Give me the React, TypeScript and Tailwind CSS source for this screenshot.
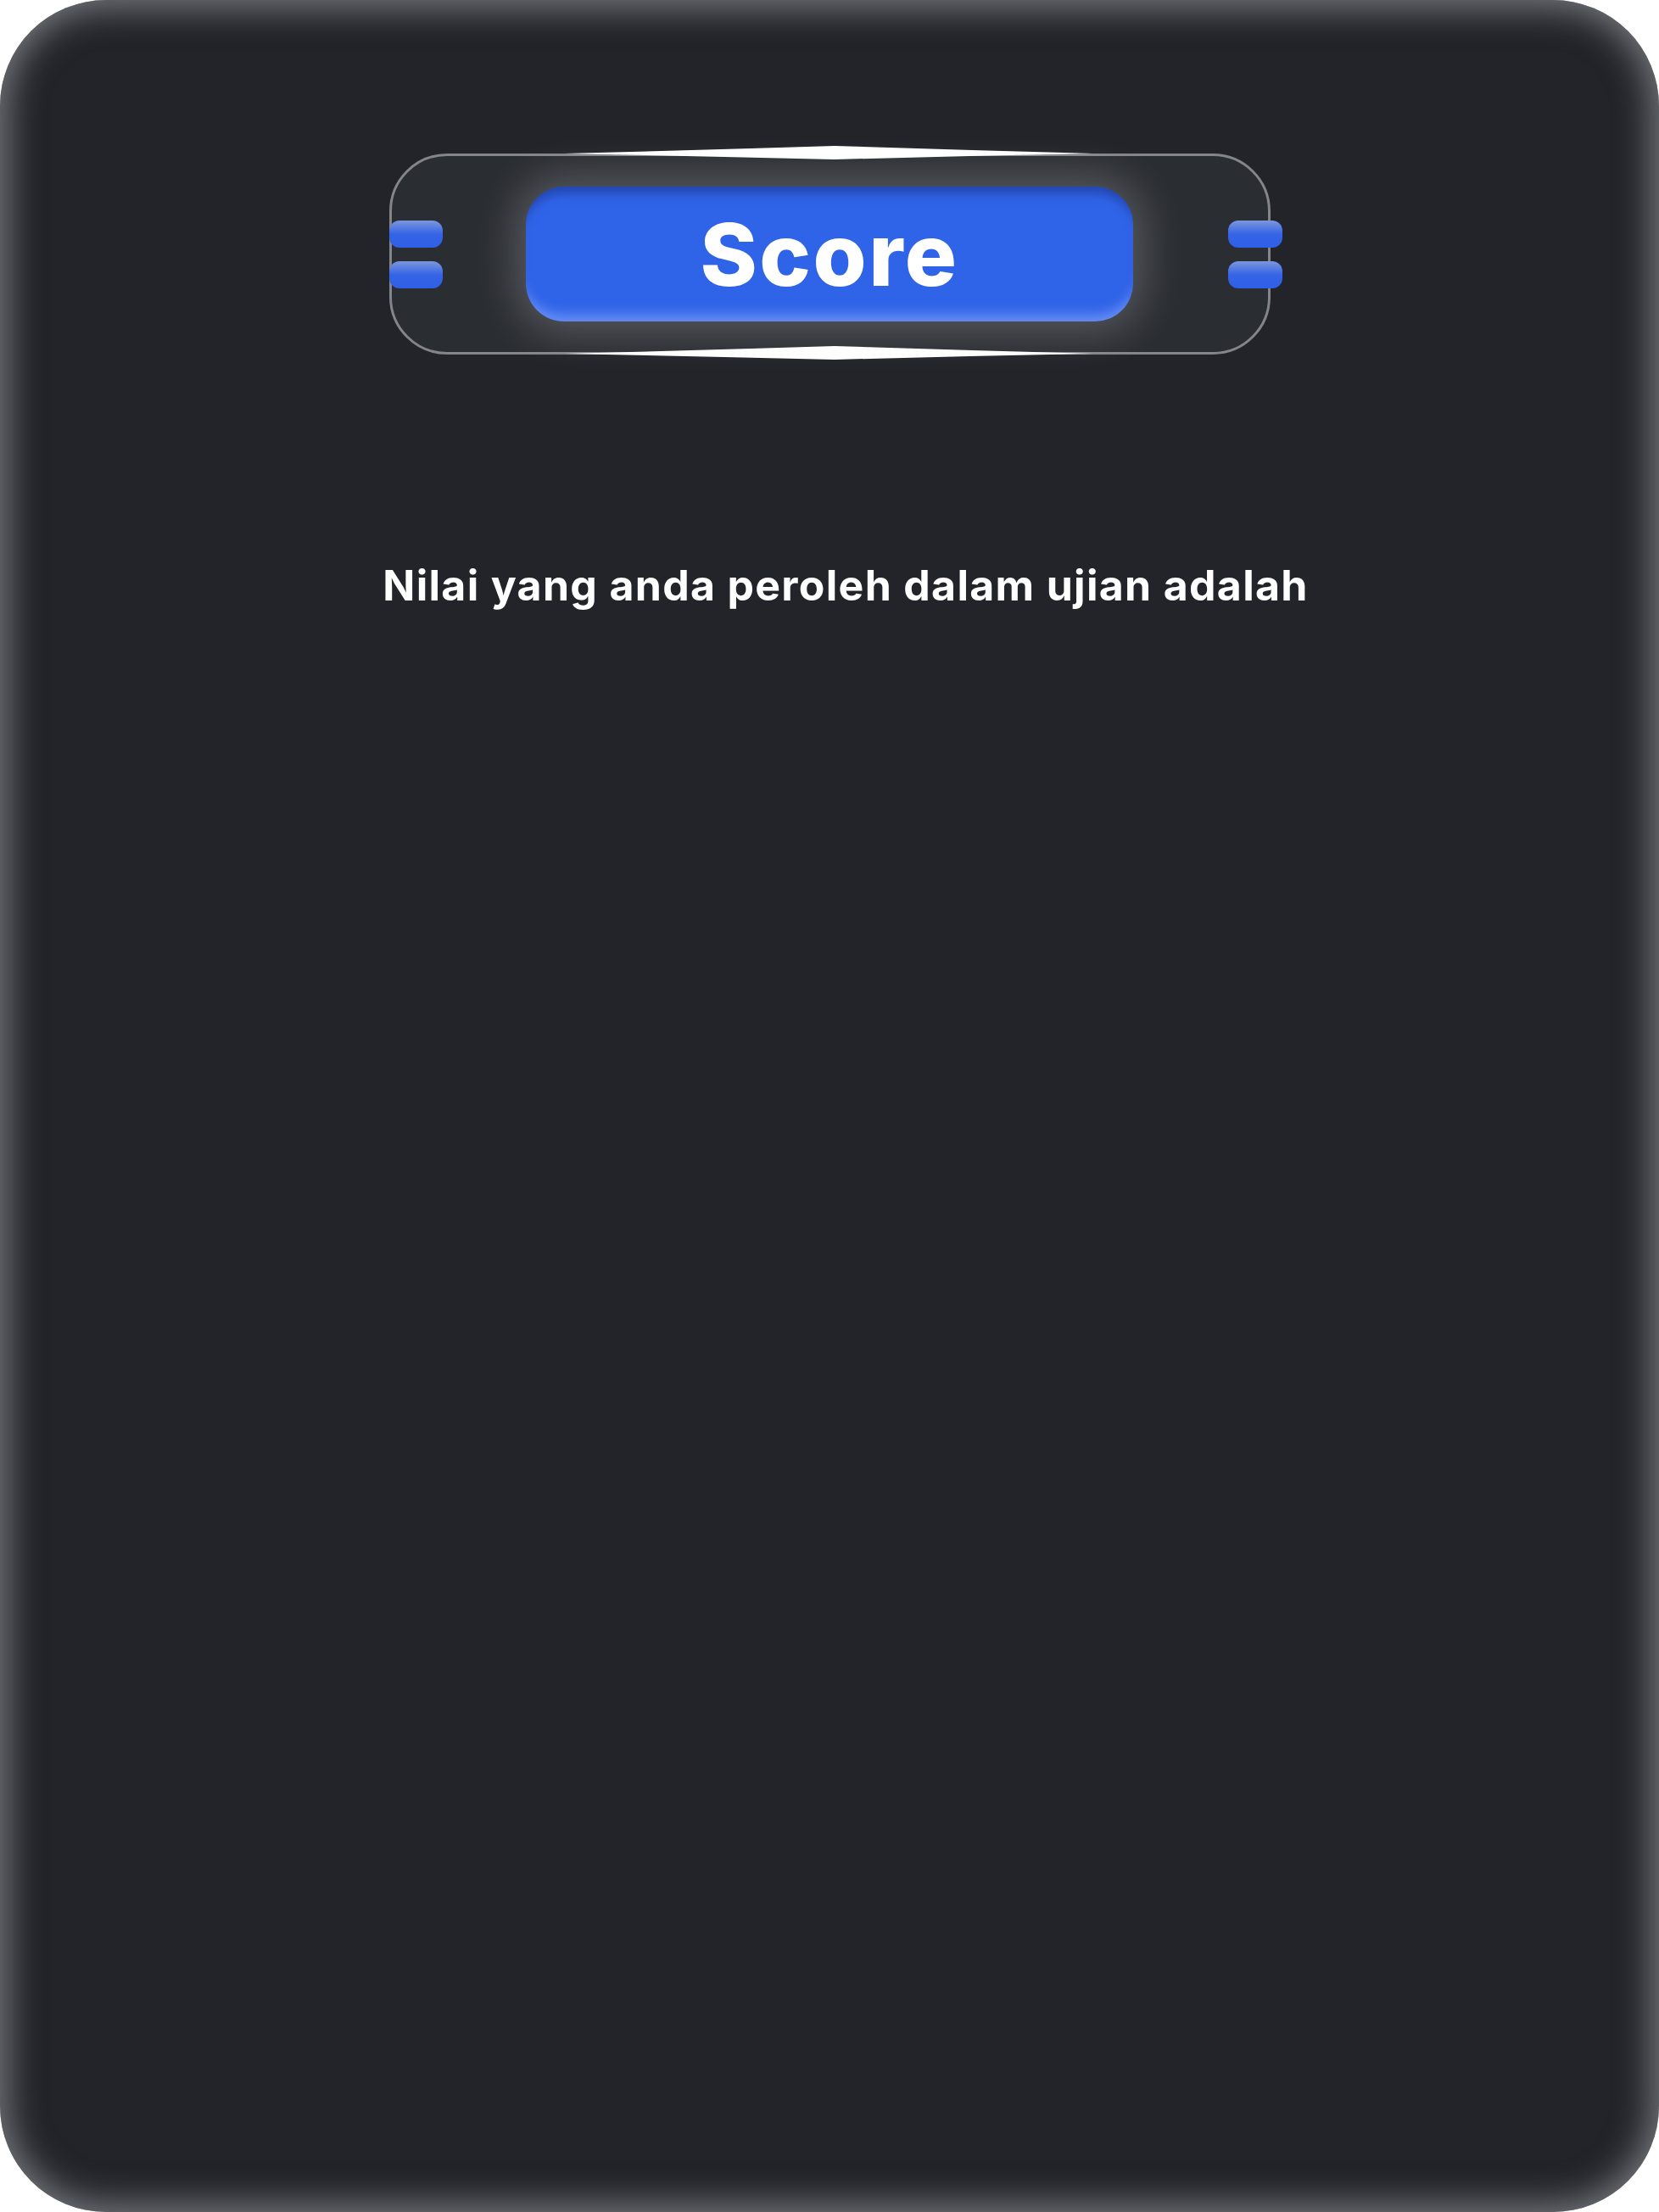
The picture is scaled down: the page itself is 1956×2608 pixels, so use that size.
export default function App() {
  return (
    <div className="w-[1956px] h-[2608px] bg-white">
      <div
        className="w-full h-full rounded-[125px] bg-[#222429] flex flex-col items-center pt-[181px] shadow-[inset_0_0_40px_9px_rgba(175,179,183,0.6)]"
        style={{ fontFamily: 'Inter, "Noto Sans", sans-serif' }}
      >
        {/* Score header card */}
        <div className="relative w-[1039px] h-[237px] rounded-[68px] border-[3px] border-[#838588] bg-[#2a2d32] flex items-center justify-center">
          <svg className="absolute left-[204px] top-[-12px]" width="622" height="16" viewBox="0 0 622 16">
            <path d="M0 9 Q160 5 318 0 Q470 5 622 9 Q470 12 318 16 Q160 12 0 9 Z" fill="#ffffff" />
          </svg>
          <svg className="absolute left-[204px] bottom-[-9px]" width="622" height="16" viewBox="0 0 622 16">
            <path d="M0 9 Q160 5 318 0 Q470 5 622 9 Q470 12 318 16 Q160 12 0 9 Z" fill="#ffffff" />
          </svg>

          {/* side tabs */}
          <div className="absolute left-[-3px] top-[76px] flex flex-col gap-[16px]">
            <div className="w-[63px] h-[32px] rounded-[12px] bg-gradient-to-b from-[#7d96dc] via-[#3563e6] to-[#2f5fe8]" />
            <div className="w-[63px] h-[32px] rounded-[12px] bg-gradient-to-b from-[#7d96dc] via-[#3563e6] to-[#2f5fe8]" />
          </div>
          <div className="absolute right-[-17px] top-[76px] flex flex-col gap-[16px]">
            <div className="w-[64px] h-[32px] rounded-[12px] bg-gradient-to-b from-[#7d96dc] via-[#3563e6] to-[#2f5fe8]" />
            <div className="w-[64px] h-[32px] rounded-[12px] bg-gradient-to-b from-[#7d96dc] via-[#3563e6] to-[#2f5fe8]" />
          </div>

          <div className="w-[716px] h-[159px] rounded-[45px] bg-[#3064e8] flex items-center justify-center shadow-[0_0_50px_12px_rgba(255,255,255,0.22),inset_0_14px_12px_-6px_rgba(25,45,130,0.55),inset_0_-16px_14px_-8px_rgba(140,170,255,0.6)]">
            <span className="text-white font-extrabold text-[102px] leading-none tracking-[0.025em]">Score</span>
          </div>
        </div>

        <p className="mt-[247px] pl-[38px] text-white font-bold text-[50px] leading-none tracking-[1.3px]">
          Nilai yang anda peroleh dalam ujian adalah
        </p>
      </div>
    </div>
  );
}
